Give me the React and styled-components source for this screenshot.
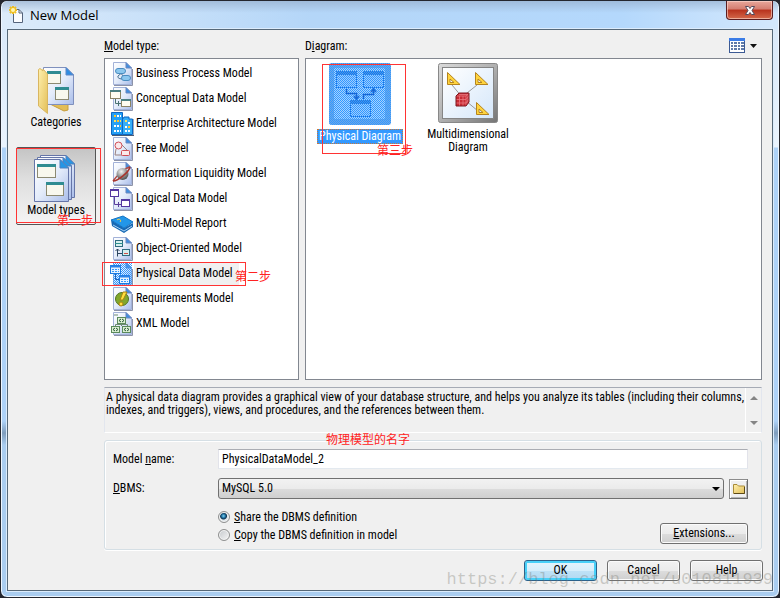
import React, { useState } from 'react';
import styled, { createGlobalStyle } from 'styled-components';

const models = [
    { name: 'Business Process Model', icon: 'process' },
    { name: 'Conceptual Data Model', icon: 'conceptual' },
    { name: 'Enterprise Architecture Model', icon: 'enterprise' },
    { name: 'Free Model', icon: 'free' },
    { name: 'Information Liquidity Model', icon: 'liquidity' },
    { name: 'Logical Data Model', icon: 'logical' },
    { name: 'Multi-Model Report', icon: 'report' },
    { name: 'Object-Oriented Model', icon: 'object' },
    { name: 'Physical Data Model', icon: 'physical', note: '第二步' },
    { name: 'Requirements Model', icon: 'requirements' },
    { name: 'XML Model', icon: 'xml' },
];

const Defs = () => (
    <HiddenSvg aria-hidden="true">
        <defs>
            <linearGradient id="paper" x1="0" y1="0" x2="1" y2="1">
                <stop offset="0" stopColor="#ffffff" />
                <stop offset="0.5" stopColor="#e4ecfa" />
                <stop offset="1" stopColor="#a9bdea" />
            </linearGradient>
            <linearGradient id="folder" x1="0" y1="0" x2="1" y2="1">
                <stop offset="0" stopColor="#fff0ae" />
                <stop offset="1" stopColor="#e3bf58" />
            </linearGradient>
            <linearGradient id="steel" x1="0" y1="0" x2="1" y2="1">
                <stop offset="0" stopColor="#dadada" />
                <stop offset="0.5" stopColor="#b0b0b0" />
                <stop offset="1" stopColor="#757575" />
            </linearGradient>
            <linearGradient id="sky" x1="0" y1="0" x2="1" y2="1">
                <stop offset="0" stopColor="#ffffff" />
                <stop offset="1" stopColor="#d5e7fa" />
            </linearGradient>
            <radialGradient id="ball" cx="0.4" cy="0.3" r="0.7">
                <stop offset="0" stopColor="#f4f4f4" />
                <stop offset="1" stopColor="#505050" />
            </radialGradient>
            <pattern id="dither" width="2" height="2" patternUnits="userSpaceOnUse">
                <rect width="1" height="1" fill="#3399ff" />
                <rect x="1" y="1" width="1" height="1" fill="#3399ff" />
            </pattern>
        </defs>
    </HiddenSvg>
);

const Page = () => (
    <g>
        <path d="M4 23.5H22.5V7" fill="none" stroke="#8d93a8" />
        <path d="M3.5 .5H16L21.5 6V22.5H3.5Z" fill="url(#paper)" stroke="#a3b2d8" />
        <path d="M16 .5V6H21.5Z" fill="#3f8fe0" stroke="#6a86be" />
    </g>
);

const drawings = {
    process: (
        <g>
            <Page />
            <path d="M9 9L14 15M14 9L8 14M8 14C7 17 12 17 14 17" fill="none" stroke="#47708f" />
            <rect x="5.500" y="6.500" width="10" height="5" rx="2.500" fill="#8cc7ee" stroke="#4a8cc0" />
            <rect x="11.500" y="13.500" width="9" height="5" rx="2.500" fill="#8cc7ee" stroke="#4a8cc0" />
        </g>
    ),
    conceptual: (
        <g>
            <Page />
            <path d="M5.500 11V16.500H11M8.500 14V19" fill="none" stroke="#4b7373" />
            <rect x=".5" y="3.500" width="10" height="8" fill="#fffdf0" stroke="#8d8565" />
            <path d="M0 4H11" stroke="#4c8080" strokeWidth="2" />
            <rect x="11.500" y="12.500" width="9" height="7" fill="#fffdf0" stroke="#8d8565" />
            <path d="M11 13H21" stroke="#4c8080" strokeWidth="2" />
        </g>
    ),
    enterprise: (
        <g>
            <path d="M2 23.500H24V7" fill="none" stroke="#4a5b74" />
            <path d="M1.500 .5H12.500V22.500H1.500Z" fill="#25a0f5" stroke="#0c67c4" />
            <path d="M12.500 7.500L14 5H19V7H22.500V22.500H12.500Z" fill="#37aef6" stroke="#0c67c4" />
            <path d="M4 4H11M4 14H11M4 19H11" stroke="#fff" strokeWidth="2" strokeDasharray="2 1" />
            <path d="M4 9H11M15 9H17" stroke="#ffe05a" strokeWidth="2" strokeDasharray="2 1" />
            <path d="M4 4H6M7 9H9M18 15H20M10 14H11" stroke="#ffc32b" strokeWidth="2" />
            <path d="M15 15H17M18 11H20M15 19H20" stroke="#fff" strokeWidth="2" strokeDasharray="2 1" />
        </g>
    ),
    free: (
        <g>
            <Page />
            <path d="M6 12L5 18H12M12 8L17 13" fill="none" stroke="#9a8080" />
            <circle cx="8.500" cy="8.500" r="3.500" fill="#fbe8ea" stroke="#cf4c54" />
            <rect x="11.500" y="13.500" width="8" height="5" rx="1" fill="#fbe8ea" stroke="#cf4c54" />
        </g>
    ),
    liquidity: (
        <g>
            <Page />
            <path d="M20 5C17 5 7 13 3 19" fill="none" stroke="#b34a42" strokeWidth="1.500" />
            <circle cx="12.500" cy="12" r="6" fill="url(#ball)" />
            <path d="M3 19C8 19 19 10 20 5" fill="none" stroke="#a8342c" strokeWidth="1.500" />
        </g>
    ),
    logical: (
        <g>
            <Page />
            <path d="M4.500 10V17.500H12M8.500 15V20" fill="none" stroke="#5b3f9c" />
            <rect x=".5" y="2.500" width="8" height="7" fill="#fff" stroke="#5438a0" />
            <path d="M0 3H9" stroke="#5438a0" strokeWidth="2" />
            <rect x="11.500" y="12.500" width="8" height="7" fill="#fff" stroke="#5438a0" />
            <path d="M11 13H20" stroke="#5438a0" strokeWidth="2" />
        </g>
    ),
    report: (
        <g>
            <path d="M1 8L2 14L14 21L23 15V11L14 16Z" fill="#1769b4" />
            <path d="M3 13L14 19L22 14" fill="none" stroke="#a9d4f8" />
            <path d="M1 8L13 4L23 10L14 16Z" fill="#2396e8" stroke="#1374c4" />
            <path d="M7 8C9 6 12 8 10 10" fill="none" stroke="#f2cf4c" />
        </g>
    ),
    object: (
        <g>
            <Page />
            <path d="M7.500 19.500V12L5.500 14M7.500 12L9.500 14M7.500 16.500H12" fill="none" stroke="#2c4660" />
            <rect x="5.500" y="3.500" width="7" height="6" fill="#d6efee" stroke="#2f6c80" />
            <path d="M5 6.500H13" stroke="#2f8f90" />
            <rect x="12.500" y="12.500" width="7" height="6" fill="#d6efee" stroke="#2f6c80" />
            <path d="M14 16.500H18" stroke="#d05048" />
        </g>
    ),
    physical: (
        <g>
            <Page />
            <rect x="3" width="19" height="24" fill="url(#dither)" />
            <path d="M5.500 12V17.500H10" fill="none" stroke="#1c62bc" />
            <rect x=".5" y="3.500" width="10" height="8" fill="#e6f2ff" stroke="#1c7ae0" />
            <path d="M0 4.500H11" stroke="#2a83e8" strokeWidth="2" />
            <path d="M2 7.500H9M2 9.500H9" stroke="#3399ff" strokeDasharray="2 1" />
            <rect x="9.500" y="13.500" width="10" height="8" fill="#e6f2ff" stroke="#1c7ae0" />
            <path d="M9 14.500H20" stroke="#2a83e8" strokeWidth="2" />
            <path d="M11 17.500H18M11 19.500H18" stroke="#3399ff" strokeDasharray="2 1" />
        </g>
    ),
    requirements: (
        <g>
            <Page />
            <circle cx="12" cy="12" r="6.500" fill="#82a72c" stroke="#4f7522" />
            <path d="M13 5H17L13 13H10Z" fill="#ffe13c" stroke="#a98214" />
            <circle cx="11" cy="17" r="2" fill="#ffe13c" stroke="#a98214" />
        </g>
    ),
    xml: (
        <g>
            <Page />
            <path d="M11.500 11V14M5.500 14V12.500H17.500V14M4 3H8" fill="none" stroke="#6d8a72" />
            {[[7, 5], [1, 14], [12, 14]].map(([x, y]) => (
                <g key={x}>
                    <rect x={x + 0.5} y={y + 0.5} width="8" height="6" fill="#dcf0d2" stroke="#5b8a5c" />
                    <path d={`M${x + 4} ${y + 2}L${x + 2} ${y + 3.5}L${x + 4} ${y + 5}M${x + 5} ${y + 2}L${x + 7} ${y + 3.5}L${x + 5} ${y + 5}`} fill="none" stroke="#28583a" />
                </g>
            ))}
        </g>
    ),
};

const MiniWindow = ({ x, y, w, h }) => (
    <g>
        <rect x={x + 0.5} y={y + 0.5} width={w} height={h} fill="#f8f8ee" stroke="#8c8a72" />
        <rect x={x} y={y} width={w + 1} height="3" fill="#2f8c92" />
    </g>
);

const CategoriesIcon = () => (
    <svg width="48" height="48" viewBox="0 0 48 48">
        <path d="M16 37L32 45L36 44V37Z" fill="#e2bd56" stroke="#c79e3d" />
        <path d="M11.500 1.500H34L41.500 9V38.500H11.500Z" fill="url(#paper)" stroke="#7f90bd" />
        <path d="M34 1.500V9H41.500Z" fill="#2e8de4" stroke="#5f86c4" />
        <MiniWindow x={15} y={5} w={13} h={12} />
        <MiniWindow x={23} y={21} w={13} h={12} />
        <path d="M6.500 3.500L8 2.500L11 5V3L15.500 8V47.500L6.500 40Z" fill="url(#folder)" stroke="#d9b660" />
    </svg>
);

const TypesIcon = () => (
    <svg width="48" height="48" viewBox="0 0 48 48">
        {[6, 3, 0].map((d) => (
            <g key={d} transform={`translate(${d} ${-d / 1.5})`}>
                <path d="M2.500 5.500H28L36.500 14V47.500H2.500Z" fill="url(#paper)" stroke="#6575a8" />
                <path d="M28 5.500V14H36.500Z" fill="#2496e6" stroke="#4f80bd" />
            </g>
        ))}
        <MiniWindow x={5} y={10} w={18} h={13} />
        <MiniWindow x={14} y={28} w={17} h={13} />
    </svg>
);

const PhysicalDiagramIcon = () => (
    <svg width="62" height="62" viewBox="0 0 62 62">
        <rect width="62" height="62" rx="3" fill="#6fa8e6" />
        <rect x="5" y="5" width="51" height="51" fill="#a6d2ff" />
        {[[7, 8], [34, 8], [21, 37]].map(([x, y]) => (
            <g key={x}>
                <rect x={x + 0.5} y={y + 0.5} width="20" height="16" fill="#9ccbff" stroke="#1a70e0" />
                <rect x={x} y={y} width="21" height="4" fill="#2a77d8" />
            </g>
        ))}
        <rect width="62" height="62" rx="3" fill="url(#dither)" />
        <path d="M17.500 26V30.500H27.500V36M25 33L27.500 36L30 33M34.500 36V31.500H44.500V26M42 29L44.500 26L47 29" fill="none" stroke="#1566d6" strokeWidth="1.500" />
    </svg>
);

const MultiDiagramIcon = () => (
    <svg width="60" height="60" viewBox="0 0 60 60">
        <rect x=".5" y=".5" width="59" height="59" rx="2" fill="url(#steel)" stroke="#888" />
        <rect x="4.500" y="4.500" width="51" height="51" fill="url(#sky)" stroke="#858585" />
        <path d="M14 22L24 34L39 22M28 38L40 48" fill="none" stroke="#9a9a9a" />
        {[[9, 9], [37, 9], [38, 39]].map(([x, y]) => (
            <path key={x} transform={`translate(${x} ${y})`} d="M.5 .5L13 12.500H.5ZM3 7L7 10.500H3Z" fill="#ffd43e" fillRule="evenodd" stroke="#b5841e" />
        ))}
        <path d="M18 33L21 30H31V39L28 43H18Z" fill="#c92b34" />
        <path d="M18 33H28V43M28 33L31 30M21.500 33V43M25 33V43M18 36.500H28L31 33M18 40H28L31 36M21 31.500H30V41" fill="none" stroke="#e87880" strokeWidth=".8" />
        <path d="M18 33L21 30H31V39L28 43H18Z" fill="none" stroke="#7c1820" />
    </svg>
);

const TitleIcon = () => (
    <svg width="16" height="18" viewBox="0 0 16 18">
        <path d="M4.500 3.500H10L13.500 7V16.500H4.500Z" fill="#fafcff" stroke="#55647c" />
        <path d="M10 3.500V7H13.500" fill="none" stroke="#55647c" />
        <path d="M4 0V8M0 4H8M1 1L7 7M7 1L1 7" stroke="#eebd20" strokeWidth="2" />
        <circle cx="4" cy="4" r="2" fill="#fff7b0" />
    </svg>
);

const ViewIcon = () => (
    <svg width="28" height="16" viewBox="0 0 28 16">
        <rect x=".5" y=".5" width="15" height="14" fill="#fff" stroke="#3c5a94" />
        <rect width="16" height="3" fill="#3b7ce6" />
        <path d="M2 5H15M2 8H15M2 11H15" stroke="#2c4f8c" strokeWidth="1.500" strokeDasharray="2 1 3 1" />
        <path d="M21 6H28L24.500 10Z" fill="#111" />
    </svg>
);

const FolderIcon = () => (
    <svg width="12" height="12" viewBox="0 0 12 12">
        <path d="M.5 10.500V1.500H4L5.500 3H11.500V10.500Z" fill="url(#folder)" stroke="#a98b38" />
        <path d="M1 10.500H11.500V4" fill="none" stroke="#5d4a17" />
    </svg>
);

const CloseIcon = () => (
    <svg width="12" height="11" viewBox="0 0 12 11">
        <path d="M1.500 1.500H4.500L6 3.500L7.500 1.500H10.500L8 5.500L10.500 9.500H7.500L6 7.500L4.500 9.500H1.500L4 5.500Z" fill="#fff" stroke="#554a5c" />
    </svg>
);

const App = () => {
    const [name, setName] = useState('PhysicalDataModel_2');
    const [share, setShare] = useState(true);

    return (
        <Window>
            <GlobalStyle />
            <Defs />
            <TitleBar>
                <TitleIcon />
                <Title>New Model</Title>
                <CloseButton aria-label="Close"><CloseIcon /></CloseButton>
            </TitleBar>
            <Client>
                <Sidebar>
                    <SideButton>
                        <CategoriesIcon />
                        Categories
                    </SideButton>
                    <SideButton $active>
                        <TypesIcon />
                        Model types
                        <SideMark><SideNote>第一步</SideNote></SideMark>
                    </SideButton>
                </Sidebar>
                <Main>
                    <Columns>
                        <Column>
                            <Header><span><u>M</u>odel type:</span></Header>
                            <ModelList>
                                {models.map((m) => (
                                    <ModelRow key={m.name}>
                                        <svg width="24" height="24" viewBox="0 0 24 24">{drawings[m.icon]}</svg>
                                        <ModelName $selected={!!m.note}>{m.name}</ModelName>
                                        {m.note && <RowMark><RowNote>{m.note}</RowNote></RowMark>}
                                    </ModelRow>
                                ))}
                            </ModelList>
                        </Column>
                        <Column>
                            <Header>
                                <span>D<u>i</u>agram:</span>
                                <ViewButton aria-label="View"><ViewIcon /></ViewButton>
                            </Header>
                            <DiagramList>
                                <Diagram>
                                    <PhysicalDiagramIcon />
                                    <DiagramName $selected>Physical Diagram</DiagramName>
                                    <DiagramMark><DiagramNote>第三步</DiagramNote></DiagramMark>
                                </Diagram>
                                <Diagram>
                                    <MultiDiagramIcon />
                                    <DiagramName>Multidimensional Diagram</DiagramName>
                                </Diagram>
                            </DiagramList>
                        </Column>
                    </Columns>
                    <Description>
                        <p>A physical data diagram provides a graphical view of your database structure, and helps you analyze its tables (including their columns, indexes, and triggers), views, and procedures, and the references between them.</p>
                        <ScrollBar>
                            <ScrollButton aria-label="Scroll up"><svg width="8" height="4"><path d="M0 4L4 0L8 4Z" fill="#858585" /></svg></ScrollButton>
                            <ScrollButton aria-label="Scroll down"><svg width="8" height="4"><path d="M0 0L4 4L8 0Z" fill="#858585" /></svg></ScrollButton>
                        </ScrollBar>
                    </Description>
                    <Group>
                        <GroupNote>物理模型的名字</GroupNote>
                        <Field>
                            <label htmlFor="name">Model <u>n</u>ame:</label>
                            <TextBox id="name" value={name} onChange={(e) => setName(e.target.value)} />
                        </Field>
                        <Field>
                            <label htmlFor="dbms"><u>D</u>BMS:</label>
                            <SelectBox>
                                <Select id="dbms" defaultValue="MySQL 5.0">
                                    <option>MySQL 5.0</option>
                                </Select>
                                <SelectArrow width="8" height="4"><path d="M0 0H8L4 4Z" fill="#000" /></SelectArrow>
                            </SelectBox>
                            <FolderButton aria-label="Select DBMS"><FolderIcon /></FolderButton>
                        </Field>
                        <Options>
                            <div>
                                <RadioLabel>
                                    <Radio type="radio" name="definition" checked={share} onChange={() => setShare(true)} />
                                    <span><u>S</u>hare the DBMS definition</span>
                                </RadioLabel>
                                <RadioLabel>
                                    <Radio type="radio" name="definition" checked={!share} onChange={() => setShare(false)} />
                                    <span><u>C</u>opy the DBMS definition in model</span>
                                </RadioLabel>
                            </div>
                            <Button $wide><u>E</u>xtensions...</Button>
                        </Options>
                    </Group>
                    <Footer>
                        <Button $primary>OK</Button>
                        <Button>Cancel</Button>
                        <Button>Help</Button>
                    </Footer>
                </Main>
            </Client>
            <Watermark>https://blog.csdn.net/u010811939</Watermark>
        </Window>
    );
};

const GlobalStyle = createGlobalStyle`
    * {
        box-sizing: border-box;
    }
    body {
        margin: 0;
        background: #24262e;
        font: 12px/13px "Roboto Condensed", Roboto, "Liberation Sans", sans-serif;
        color: #000;
    }
    button, input, select {
        font: inherit;
        color: inherit;
        margin: 0;
        padding: 0;
    }
    svg {
        display: block;
        flex: none;
    }
`;

const HiddenSvg = styled.svg`
    position: absolute;
    width: 0;
    height: 0;
`;

const Window = styled.div`
    position: relative;
    display: flex;
    flex-direction: column;
    min-height: 100vh;
    padding: 0 5px 5px;
    border: 1px solid #24262e;
    border-radius: 7px;
    box-shadow: inset 0 0 0 1px #eef6ff;
    background: linear-gradient(#d6e6f7 0, #e9f3fe 146px, #aed2f8 147px, #aed2f8 420px, #7f9dbd 432px, #aacdf0 444px);
`;

const TitleBar = styled.header`
    display: flex;
    align-items: center;
    gap: 5px;
    height: 28px;
    margin: 0 -4px;
    padding: 0 5px 0 7px;
    border-radius: 6px 6px 0 0;
    background: linear-gradient(rgba(150, 175, 205, 0.7), rgba(174, 212, 250, 0) 12px),
        linear-gradient(90deg, #dcebfa, #b4d6f8 40%, #b4d8fc 80%, #d4e8fc);
`;

const Title = styled.h1`
    flex: 1;
    margin: 0;
    font: 13px/18px "Open Sans", sans-serif;
`;

const CloseButton = styled.button`
    display: flex;
    align-items: center;
    justify-content: center;
    align-self: flex-start;
    width: 47px;
    height: 19px;
    border: 1px solid #5a1d20;
    border-top: 0;
    border-radius: 0 0 4px 4px;
    box-shadow: inset 0 0 0 1px rgba(255, 220, 210, 0.6);
    background: linear-gradient(#e8a79b, #d47d70 45%, #b8321d 50%, #d4694b);
`;

const Client = styled.main`
    display: flex;
    flex: 1;
    gap: 8px;
    margin: 0 1px 1px;
    padding: 0 9px 9px 8px;
    border: 1px solid #566878;
    box-shadow: 0 0 0 1px #dcecfc;
    background: #f0f0f0;
`;

const Sidebar = styled.nav`
    display: flex;
    flex-direction: column;
    gap: 10px;
    width: 80px;
    padding-top: 29px;
`;

const SideButton = styled.button`
    position: relative;
    display: flex;
    flex-direction: column;
    align-items: center;
    gap: 2px;
    height: 78px;
    padding-top: 6px;
    border: 1px solid ${(p) => (p.$active ? '#555' : 'transparent')};
    border-radius: 2px;
    background: ${(p) => (p.$active ? 'linear-gradient(#c4c4c4, #dedede 40%, #f4f4f4)' : 'none')};
`;

const Mark = styled.span`
    position: absolute;
    border: 1px solid #f33;
    pointer-events: none;
`;

const Note = styled.span`
    position: absolute;
    color: #f22;
    font: 12px/14px "Liberation Sans", "Noto Sans CJK SC", sans-serif;
    white-space: nowrap;
`;

const SideMark = styled(Mark)`
    inset: 0 -6px 1px -1px;
`;

const SideNote = styled(Note)`
    right: 7px;
    bottom: -6px;
`;

const RowMark = styled(Mark)`
    inset: 1px 52px 0 -3px;
    z-index: 1;
`;

const RowNote = styled(Note)`
    left: 132px;
    top: 7px;
`;

const DiagramMark = styled(Mark)`
    inset: 1px 8px -10px 16px;
`;

const DiagramNote = styled(Note)`
    right: -8px;
    bottom: -5px;
`;

const GroupNote = styled(Note)`
    left: 221px;
    top: -8px;
`;

const Main = styled.div`
    display: flex;
    flex-direction: column;
    flex: 1;
    min-width: 0;
`;

const Columns = styled.div`
    display: grid;
    flex: 1;
    grid-template-columns: 195px minmax(0, 1fr);
    gap: 6px;
    margin-right: 1px;
`;

const Column = styled.section`
    display: flex;
    flex-direction: column;
`;

const Header = styled.div`
    display: flex;
    align-items: center;
    justify-content: space-between;
    height: 28px;
    padding: 4px 5px 0 0;
`;

const ViewButton = styled.button`
    border: 0;
    background: none;
`;

const ModelList = styled.ul`
    flex: 1;
    margin: 0;
    padding: 2px 0 0;
    list-style: none;
    border: 1px solid #828790;
    background: #fff;
`;

const ModelRow = styled.li`
    position: relative;
    display: flex;
    align-items: center;
    height: 25px;
    padding-left: 5px;
`;

const ModelName = styled.span`
    padding: 5px 6px 5px 2px;
    background: ${(p) => (p.$selected ? '#f0f0f0' : 'none')};
`;

const DiagramList = styled.div`
    display: flex;
    flex: 1;
    align-items: flex-start;
    padding-top: 4px;
    border: 1px solid #828790;
    background: #fff;
`;

const Diagram = styled.div`
    position: relative;
    display: flex;
    flex-direction: column;
    align-items: center;
    gap: 4px;
    width: 108px;
`;

const DiagramName = styled.span`
    padding: 1px 2px;
    text-align: center;
    color: ${(p) => (p.$selected ? '#fff' : '#000')};
    background: ${(p) => (p.$selected ? '#3399ff' : 'none')};
    outline: ${(p) => (p.$selected ? '1px dotted #c8783a' : 'none')};
    outline-offset: -1px;
`;

const Description = styled.div`
    display: flex;
    margin: 7px 1px 0 0;
    min-height: 46px;
    border: 1px solid;
    border-color: #a6abb5 #e2e6ee #fff;
    p {
        flex: 1;
        margin: 0;
        padding: 3px 0 3px 1px;
    }
`;

const ScrollBar = styled.div`
    display: flex;
    flex-direction: column;
    justify-content: space-between;
    width: 16px;
    padding: 1px 0;
    border-left: 1px solid #fff;
`;

const ScrollButton = styled.button`
    display: flex;
    align-items: center;
    justify-content: center;
    height: 17px;
    border: 0;
    background: none;
`;

const Group = styled.div`
    position: relative;
    display: flex;
    flex-direction: column;
    gap: 9px;
    margin: 7px 1px 0 0;
    padding: 8px 13px 5px 8px;
    border: 1px solid #d5dfe5;
    border-radius: 3px;
    box-shadow: inset 1px 1px #fff, 0 1px #fff;
`;

const Field = styled.div`
    display: flex;
    align-items: center;
    label {
        width: 105px;
    }
`;

const TextBox = styled.input`
    flex: 1;
    min-width: 0;
    height: 20px;
    padding: 0 3px;
    border: 1px solid;
    border-color: #abadb3 #e2e3ea #e3e9ef;
    background: #fff;
`;

const SelectBox = styled.div`
    position: relative;
    flex: 1;
`;

const Select = styled.select`
    display: block;
    width: 100%;
    height: 21px;
    padding: 0 3px;
    appearance: none;
    border: 1px solid #707070;
    border-radius: 3px;
    background: linear-gradient(#f2f2f2, #ebebeb 50%, #dcdcdc 51%, #cfcfcf);
`;

const SelectArrow = styled.svg`
    position: absolute;
    right: 4px;
    top: 9px;
    pointer-events: none;
`;

const FolderButton = styled.button`
    display: flex;
    align-items: center;
    justify-content: center;
    width: 19px;
    height: 20px;
    margin-left: 5px;
    border: 1px solid;
    border-color: #8c8c8c #6c6c6c #6c6c6c #8c8c8c;
    box-shadow: inset 1px 1px #fff, inset -1px -1px #b4b4b4;
    background: #f0f0f0;
`;

const Options = styled.div`
    display: flex;
    align-items: flex-end;
    justify-content: space-between;
    padding-left: 105px;
`;

const RadioLabel = styled.label`
    display: flex;
    align-items: center;
    gap: 4px;
    height: 18px;
`;

const Radio = styled.input`
    width: 12px;
    height: 12px;
    appearance: none;
    border: 1px solid #8e8f8f;
    border-radius: 50%;
    background: linear-gradient(135deg, #c4c8cc, #f6f6f6);
    box-shadow: inset 0 0 0 1px #f4f4f4;
    &:checked {
        background: radial-gradient(circle at 45% 40%, #7fd4f4 0, #1c6c9c 2px, #0f3350 3px, #dfe6ea 4px);
    }
`;

const Button = styled.button`
    width: ${(p) => (p.$wide ? '88px' : '73px')};
    height: 21px;
    border: 1px solid ${(p) => (p.$primary ? '#2c628b' : '#707070')};
    border-radius: 3px;
    box-shadow: ${(p) => (p.$primary ? 'inset 0 0 0 2px #48d0f8' : 'inset 0 0 0 1px #fbfbfb')};
    background: ${(p) => (p.$primary
        ? 'linear-gradient(#e6f4fc, #d6eefb 50%, #bfe2f6 51%, #b2d9f2)'
        : 'linear-gradient(#f2f2f2, #ebebeb 50%, #dddddd 51%, #cfcfcf)')};
`;

const Footer = styled.footer`
    display: flex;
    justify-content: flex-end;
    gap: 10px;
    margin-top: 10px;
`;

const Watermark = styled.div`
    position: absolute;
    right: 6px;
    bottom: 7px;
    font: 17px/20px "Liberation Mono", monospace;
    color: rgba(120, 120, 110, 0.35);
    pointer-events: none;
`;

export default App;
